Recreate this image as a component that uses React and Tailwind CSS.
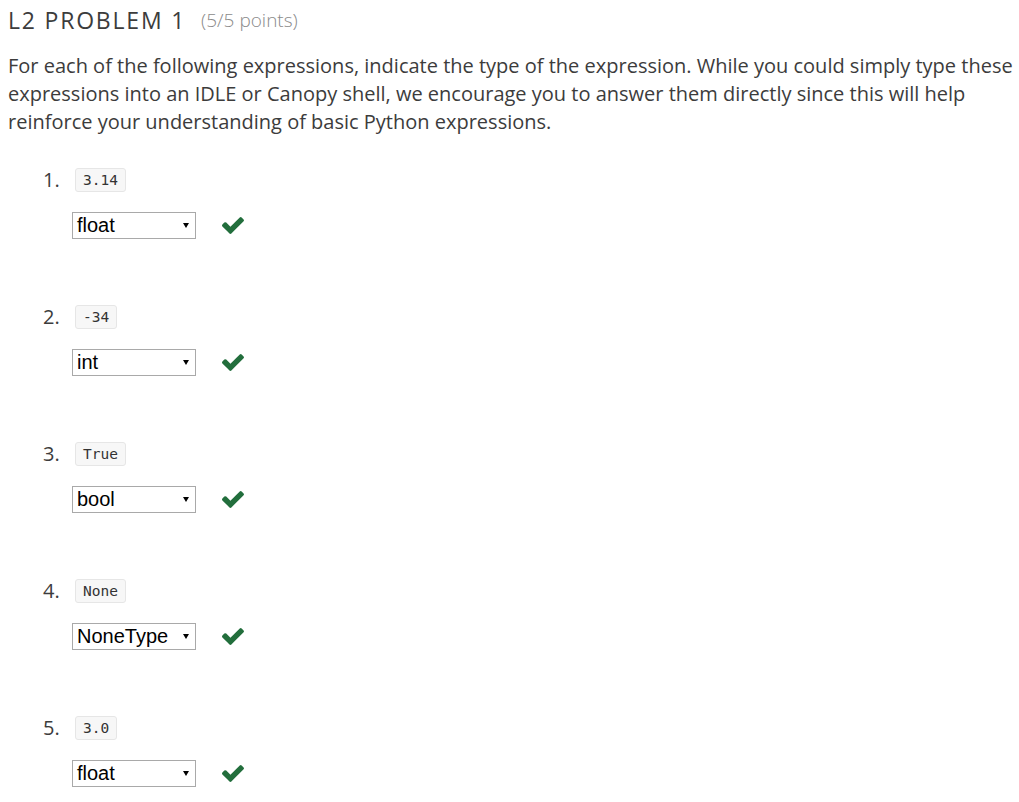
import React from "react";

const items = [
  { code: "3.14", answer: "float" },
  { code: "-34", answer: "int" },
  { code: "True", answer: "bool" },
  { code: "None", answer: "NoneType" },
  { code: "3.0", answer: "float" },
];

function Check() {
  return (
    <svg width="22" height="17" viewBox="121 334 1550 1188" className="block">
      <path
        fill="#226e3c"
        d="M1671 566q0 40-28 68l-724 724-136 136q-28 28-68 28t-68-28l-136-136-362-362q-28-28-28-68t28-68l136-136q28-28 68-28t68 28l294 295 656-657q28-28 68-28t68 28l136 136q28 28 28 68z"
      />
    </svg>
  );
}

function FakeSelect({ value }) {
  return (
    <div className="relative flex h-[27px] w-[124px] items-center border border-[#a9a9a9] bg-white pl-[4px] font-['Liberation_Sans',Arial,sans-serif] text-[20px] leading-none text-black">
      <span className="-mt-[1px]">{value}</span>
      <svg
        width="6"
        height="5"
        viewBox="0 0 6 5"
        className="absolute right-[6px] top-[10px]"
      >
        <path d="M0 0h6L3 5z" fill="#000" />
      </svg>
    </div>
  );
}

export default function App() {
  return (
    <div className="h-[802px] w-[1019px] overflow-hidden bg-white font-['Open_Sans',sans-serif] text-[#3c3c3c]">
      <div className="flex h-[40px] items-center pl-[8px]">
        <h2 className="text-[23px] font-normal tracking-[1.8px] text-[#3c3c3c]">
          L2 PROBLEM 1
        </h2>
        <span className="ml-[15px] text-[19px] font-light text-[#8a8a8a]">
          (5/5 points)
        </span>
      </div>
      <p className="mt-[12px] w-[1019px] pl-[8px] text-[20px] leading-[28px]">
        For each of the following expressions, indicate the type of the
        expression. While you could simply type these expressions into an IDLE
        or Canopy shell, we encourage you to answer them directly since this
        will help reinforce your understanding of basic Python expressions.
      </p>
      <ol className="mt-[32px] pl-[43px]">
        {items.map((it, i) => (
          <li key={i} className="flex h-[137px]">
            <div className="w-[29px] text-[20px] leading-[24px] text-[#3c3c3c]">
              {i + 1}.
            </div>
            <div className="flex flex-col items-start">
              <code className="ml-[3px] h-[24px] rounded-[3px] border border-[#e6e6e6] bg-[#f7f7f7] px-[7px] font-['DejaVu_Sans_Mono',monospace] text-[14.5px] leading-[23px] text-[#333]">
                {it.code}
              </code>
              <div className="mt-[20px] flex items-center">
                <FakeSelect value={it.answer} />
                <div className="ml-[26px]">
                  <Check />
                </div>
              </div>
            </div>
          </li>
        ))}
      </ol>
    </div>
  );
}
